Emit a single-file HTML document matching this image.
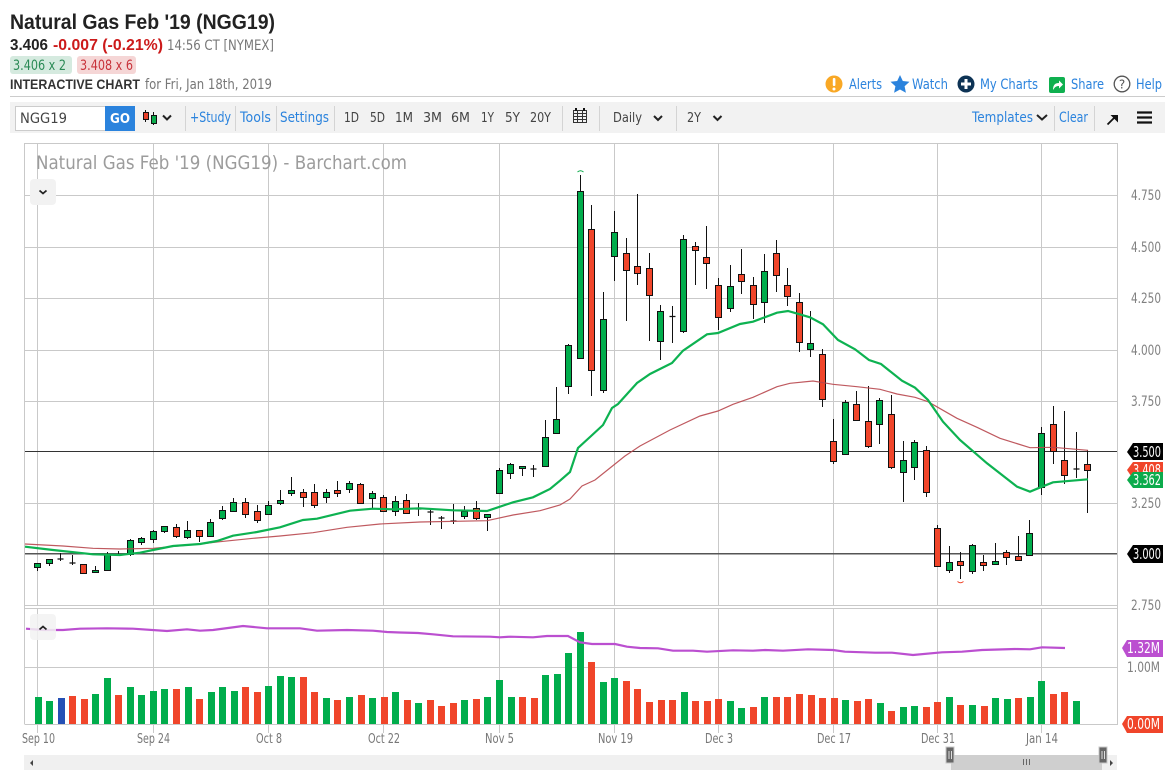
<!DOCTYPE html>
<html lang="en"><head><meta charset="utf-8"><title>Natural Gas Feb '19 (NGG19)</title>
<style>
html,body{margin:0;padding:0;background:#fff;width:1175px;height:773px;overflow:hidden}
svg{display:block}
text{font-family:"DejaVu Sans","Liberation Sans",sans-serif}
.l{fill:#2b83dd;font-size:14px}
.t{fill:#444;font-size:13.5px}
.y{fill:#808080;font-size:14px}
.d{fill:#777;font-size:13px}
.w{fill:#fff;font-size:15px}
</style></head><body>
<svg width="1175" height="773" viewBox="0 0 1175 773" xmlns="http://www.w3.org/2000/svg">
<rect width="1175" height="773" fill="#fff"/>
<!-- header -->
<text x="10" y="29" font-size="21" font-weight="bold" fill="#222" style="font-family:'Liberation Sans',sans-serif" textLength="265" lengthAdjust="spacingAndGlyphs">Natural Gas Feb '19 (NGG19)</text>
<text x="10" y="50" font-size="16" font-weight="bold" fill="#222" style="font-family:'Liberation Sans',sans-serif" textLength="38" lengthAdjust="spacingAndGlyphs">3.406</text>
<text x="53" y="50" font-size="16" font-weight="bold" fill="#cc1a1a" style="font-family:'Liberation Sans',sans-serif" textLength="110" lengthAdjust="spacingAndGlyphs">-0.007 (-0.21%)</text>
<text x="167" y="50" font-size="14" fill="#777" textLength="107" lengthAdjust="spacingAndGlyphs">14:56 CT [NYMEX]</text>
<rect x="10" y="56" width="62" height="18" rx="3" fill="#d5eadf"/>
<text x="13" y="70" font-size="14" fill="#2a8a55" textLength="53" lengthAdjust="spacingAndGlyphs">3.406 x 2</text>
<rect x="77" y="56" width="59" height="18" rx="3" fill="#f5d6d6"/>
<text x="80" y="70" font-size="14" fill="#c8323a" textLength="53" lengthAdjust="spacingAndGlyphs">3.408 x 6</text>
<text x="10" y="89" font-size="14" font-weight="bold" fill="#333" style="font-family:'Liberation Sans',sans-serif" textLength="130" lengthAdjust="spacingAndGlyphs">INTERACTIVE CHART</text>
<text x="145" y="89" font-size="14" fill="#777" textLength="127" lengthAdjust="spacingAndGlyphs">for Fri, Jan 18th, 2019</text>
<!-- top links -->
<circle cx="834" cy="84" r="8.5" fill="#f9a825"/><rect x="832.8" y="78" width="2.6" height="8" rx="1" fill="#fff"/><circle cx="834" cy="89" r="1.5" fill="#fff"/>
<text class="l" x="849" y="89" textLength="33" lengthAdjust="spacingAndGlyphs">Alerts</text>
<path d="M900 75l2.8 6 6.700.8-4.900 4.500 1.300 6.500-5.900-3.300-5.900 3.300 1.300-6.500-4.900-4.500 6.700-.8z" fill="#2b83dd"/>
<text class="l" x="912" y="89" textLength="36" lengthAdjust="spacingAndGlyphs">Watch</text>
<circle cx="966" cy="84" r="8.5" fill="#0d3355"/><path d="M966 79v10M961 84h10" stroke="#fff" stroke-width="3"/>
<text class="l" x="980" y="89" textLength="58" lengthAdjust="spacingAndGlyphs">My Charts</text>
<rect x="1049" y="77" width="16" height="16" rx="2" fill="#0fb04f"/><path d="M1053 90c0-5 2-7 6-7v-2.500l4 4-4 4v-2.500c-3 0-4 1-6 4z" fill="#fff"/>
<text class="l" x="1071" y="89" textLength="33" lengthAdjust="spacingAndGlyphs">Share</text>
<circle cx="1122" cy="84" r="7.800" fill="none" stroke="#555" stroke-width="1.300"/><text x="1122" y="88.500" font-size="12" fill="#555" text-anchor="middle">?</text>
<text class="l" x="1136" y="89" textLength="26" lengthAdjust="spacingAndGlyphs">Help</text>
<rect x="10" y="96" width="1155" height="1" fill="#ccc"/>
<!-- toolbar -->
<rect x="10" y="102" width="1155" height="31" fill="#f2f2f2"/>
<rect x="15.500" y="106.500" width="90" height="24" fill="#fff" stroke="#ccc"/>
<text x="20" y="123" font-size="14.500" fill="#444" textLength="47" lengthAdjust="spacingAndGlyphs">NGG19</text>
<rect x="105" y="106" width="30" height="25" fill="#2b83dd"/>
<text x="110" y="123" font-size="13.500" font-weight="bold" fill="#fff" textLength="20" lengthAdjust="spacingAndGlyphs">GO</text>
<path d="M145.500 110v12M153.500 112v13" stroke="#111"/><rect x="143.500" y="112.500" width="5" height="7" fill="#e8402a" stroke="#111"/><rect x="151.500" y="115.500" width="5" height="8" fill="#0cab4c" stroke="#111"/>
<path d="M163 115.500l4 4 4-4M654 116l4 4 4-4M713.500 116l4 4 4-4M1037 115l5 4.500 5-4.500" fill="none" stroke="#222" stroke-width="2"/>
<path d="M185.500 106v25M235.500 106v25M276.500 106v25M334.500 106v25M562.500 106v25M599.500 106v25M676.500 106v25M1054.500 106v25M1094.500 106v25" stroke="#d4d4d4"/>
<text class="l" x="190" y="122" textLength="41" lengthAdjust="spacingAndGlyphs">+Study</text>
<text class="l" x="240" y="122" textLength="31" lengthAdjust="spacingAndGlyphs">Tools</text>
<text class="l" x="280" y="122" textLength="49" lengthAdjust="spacingAndGlyphs">Settings</text>
<text class="t" x="344" y="122" textLength="15" lengthAdjust="spacingAndGlyphs">1D</text>
<text class="t" x="370" y="122" textLength="15" lengthAdjust="spacingAndGlyphs">5D</text>
<text class="t" x="395" y="122" textLength="18" lengthAdjust="spacingAndGlyphs">1M</text>
<text class="t" x="423" y="122" textLength="19" lengthAdjust="spacingAndGlyphs">3M</text>
<text class="t" x="451" y="122" textLength="19" lengthAdjust="spacingAndGlyphs">6M</text>
<text class="t" x="481" y="122" textLength="13" lengthAdjust="spacingAndGlyphs">1Y</text>
<text class="t" x="505" y="122" textLength="15" lengthAdjust="spacingAndGlyphs">5Y</text>
<text class="t" x="530" y="122" textLength="21" lengthAdjust="spacingAndGlyphs">20Y</text>
<g fill="none" stroke="#333"><rect x="573.500" y="110.500" width="13" height="12"/><path d="M573.500 113.500h13M573.500 116.500h13M573.500 119.500h13M577.500 110v13M582.500 110v13"/></g><path d="M576 108v3M584 108v3" stroke="#111" stroke-width="2"/>
<text class="t" x="613" y="122" textLength="29" lengthAdjust="spacingAndGlyphs">Daily</text>
<text class="t" x="687" y="122" textLength="14" lengthAdjust="spacingAndGlyphs">2Y</text>
<text class="l" x="972" y="122" textLength="61" lengthAdjust="spacingAndGlyphs">Templates</text>
<text class="l" x="1059" y="122" textLength="29" lengthAdjust="spacingAndGlyphs">Clear</text>
<path d="M1107.500 124.500l8-8" stroke="#111" stroke-width="1.800"/><path d="M1110.500 115h7.500v7.500z" fill="#111"/>
<path d="M1137 112.500h15M1137 117.500h15M1137 122.500h15" stroke="#111" stroke-width="2.200"/>
<!-- chart frame and grid -->
<g stroke="#c9c9c9" fill="none">
<path d="M24.500 724V143.500H1117.500V724.500H24.500"/>
<path d="M25 195.500H1117M25 247.500H1117M25 298.500H1117M25 350.500H1117M25 401.500H1117M25 503.500H1117M25 605.500H1117M25 608.500H1117M25 667.500H1117"/>
<path d="M37.500 143V605M153.500 143V605M268.500 143V605M383.500 143V605M499.500 143V605M614.500 143V605M718.500 143V605M833.500 143V605M937.500 143V605M1041.500 143V605"/>
<path d="M37.500 609V733M153.500 609V733M268.500 609V733M383.500 609V733M499.500 609V733M614.500 609V733M718.500 609V733M833.500 609V733M937.500 609V733M1041.500 609V733"/>
</g>
<text x="36" y="169" font-size="19" fill="#9c9c9c" textLength="371" lengthAdjust="spacingAndGlyphs">Natural Gas Feb '19 (NGG19) - Barchart.com</text>
<rect x="30" y="179" width="26" height="26" rx="4" fill="#f2f2f2"/>
<path d="M39.500 190.500l3.500 3 3.500-3" fill="none" stroke="#222" stroke-width="1.800"/>
<!-- horizontal levels -->
<path d="M25 451.500H1117" stroke="#333" stroke-width="1"/>
<path d="M25 553.700H1117" stroke="#555" stroke-width="1.500"/>
<!-- wicks -->
<path stroke="#111" stroke-width="1" fill="none" d="M37.500 563V571M49.500 559V566M60.500 553V561M72.500 555V565M95.500 566V573M107.500 552V571M118.500 551V556M130.500 539V556M141.500 537V545M153.500 530V543M164.500 526V533M176.500 524V538M187.500 521V539M199.500 530V542M210.500 519V537M222.500 506V520M233.500 498V512M245.500 498V518M257.500 505V523M268.500 501V515M280.500 490V505M291.500 477V496M303.500 489V507M314.500 484V508M326.500 489V503M337.500 481V497M349.500 481V493M360.500 483V504M372.500 491V508M383.500 495V512M395.500 496V516M406.500 494V514M418.500 503V516M430.500 509V525M441.500 516V529M453.500 504V524M464.500 506V519M476.500 501V520M487.500 514V531M499.500 468V494M510.500 463V479M522.500 466V476M533.500 465V477M545.500 420V467M556.500 387V434M568.500 344V394M580.500 175V358M591.500 205V396M603.500 292V393M614.500 211V281M626.500 238V321M637.500 194V285M649.500 253V341M660.500 305V360M672.500 306V343M683.500 235V333M695.500 242V285M706.500 226V289M718.500 278V330M730.500 265V312M741.500 249V294M753.500 277V319M764.500 254V323M776.500 240V292M787.500 268V306M799.500 293V352M810.500 311V357M822.500 349V407M833.500 419V464M845.500 400V455M856.500 391V421M868.500 386V448M879.500 398V444M891.500 395V469M903.500 441V502M914.500 440V480M926.500 446V497M937.500 525V567M949.500 546V573M960.500 552V579M972.500 544V574M983.500 555V571M995.500 543V565M1006.500 550V565M1018.500 536V561M1029.500 520V556M1041.500 427V495M1053.500 406V464M1064.500 411V484M1076.500 432V478M1087.500 450V513"/>
<path stroke="#111" stroke-width="1.300" fill="none" d="M57.500 559h6M69.500 563h6M115.500 555h6M415.500 509h6M427.500 512h6M438.500 518h6M450.500 521h6M530.500 469h6M669.500 316.500h6M1073.500 469h6"/>
<!-- green bodies -->
<g fill="#00ad4c" stroke="#111">
<path d="M34.500 563.500h6v4h-6zM46.500 559.500h6v4h-6zM92.500 570.500h6v2h-6zM104.500 554.500h6v16h-6zM127.500 540.500h6v14h-6zM138.500 538.500h6v4h-6zM150.500 531.500h6v8h-6zM161.500 526.500h6v5h-6zM184.500 530.500h6v7h-6zM207.500 522.500h6v14h-6zM219.500 510.500h6v8h-6zM230.500 502.500h6v9h-6zM265.500 505.500h6v9h-6zM277.500 500.500h6v3h-6zM288.500 490.500h6v3h-6zM323.500 492.500h6v5h-6zM346.500 483.500h6v6h-6zM369.500 493.500h6v5h-6zM392.500 501.500h6v10h-6zM461.500 511.500h6v5h-6zM484.500 514.500h6v3h-6zM496.500 470.500h6v23h-6zM507.500 464.500h6v9h-6zM519.500 466.500h6v2h-6zM542.500 437.500h6v29h-6zM553.500 419.500h6v14h-6zM565.500 345.500h6v41h-6zM577.500 191.500h6v167h-6zM600.500 319.500h6v71h-6zM611.500 232.500h6v24h-6zM657.500 311.500h6v30h-6zM680.500 239.500h6v92h-6zM727.500 286.500h6v22h-6zM761.500 271.500h6v31h-6zM807.500 343.500h6v6h-6zM842.500 402.500h6v52h-6zM876.500 400.500h6v24h-6zM900.500 460.500h6v12h-6zM911.500 442.500h6v25h-6zM946.500 562.500h6v8h-6zM969.500 545.500h6v26h-6zM992.500 561.500h6v3h-6zM1026.500 533.500h6v22h-6zM1038.500 433.500h6v54h-6z"/>
</g>
<!-- red bodies -->
<g fill="#f0452a" stroke="#111">
<path d="M80.500 564.500h6v9h-6zM173.500 527.500h6v9h-6zM196.500 530.500h6v6h-6zM242.500 502.500h6v12h-6zM254.500 511.500h6v9h-6zM300.500 492.500h6v5h-6zM311.500 492.500h6v13h-6zM334.500 490.500h6v3h-6zM357.500 484.500h6v19h-6zM380.500 497.500h6v14h-6zM403.500 500.500h6v13h-6zM473.500 508.500h6v10h-6zM588.500 229.500h6v141h-6zM623.500 253.500h6v17h-6zM634.500 266.500h6v7h-6zM646.500 268.500h6v27h-6zM692.500 246.500h6v4h-6zM703.500 257.500h6v6h-6zM715.500 285.500h6v32h-6zM738.500 274.500h6v7h-6zM750.500 285.500h6v19h-6zM773.500 253.500h6v22h-6zM784.500 285.500h6v11h-6zM796.500 302.500h6v40h-6zM819.500 354.500h6v45h-6zM830.500 441.500h6v20h-6zM853.500 404.500h6v16h-6zM865.500 421.500h6v25h-6zM888.500 414.500h6v53h-6zM923.500 450.500h6v42h-6zM934.500 528.500h6v38h-6zM957.500 561.500h6v4h-6zM980.500 562.500h6v3h-6zM1003.500 552.500h6v5h-6zM1015.500 556.500h6v4h-6zM1050.500 424.500h6v27h-6zM1061.500 460.500h6v15h-6zM1084.500 464.500h6v6h-6z"/>
</g>
<!-- hi/lo markers -->
<path d="M577.500 172q3-2.500 6 0" fill="none" stroke="#0cab4c" stroke-width="1"/>
<path d="M957.500 581.500q3 2.500 6 0" fill="none" stroke="#f0452a" stroke-width="1"/>
<!-- moving averages -->
<polyline fill="none" stroke="#b8474e" stroke-width="1.200" opacity=".9" points="25,544 63,546 93,548.300 120,549 153,548.300 200,544 220,541.700 253,538.300 280,536 313,532.700 347,527.300 380,524 420,522 487,520.700 513,515 540,510.700 560,505 570,499 582,486 595,480 610,468 625,456 640,446 670,430 700,416 718,411 733,404.300 753,397.300 777,386.700 790,383.300 813,381 833,384.300 857,386.700 880,389.300 897,394 915,397.300 928,401.700 957,418.300 977,427.300 1000,438.300 1030,447.700 1053,447.300 1088,450.300"/>
<polyline fill="none" stroke="#0db251" stroke-width="2.200" points="25,546.700 53,550 93,554.300 120,555 140,552.700 153,550 173,546 200,544 217,541 233,535.700 257,532 280,527.300 303,520 317,518.700 350,510.700 373,508.700 393,509.300 420,508.300 453,510.300 487,511 513,502.300 533,497.300 550,489 560,480.700 570,472 578,448 590,437 603,425 612,408 618,404 637,383 650,374 672,363 683,350.700 707,334.300 718,333 740,324 753,321.700 777,312.700 788,311 810,317.300 823,324.300 838,340 855,349.300 869,360 881,364 902,380.700 915,387.700 928,400 943,421.700 960,440 987,463.300 1017,486.700 1030,491.700 1042,486.700 1053,482.300 1088,479.300"/>
<!-- y axis -->
<g class="y"><text class="y" x="1131" y="200" textLength="30" lengthAdjust="spacingAndGlyphs">4.750</text><text class="y" x="1131" y="252" textLength="30" lengthAdjust="spacingAndGlyphs">4.500</text><text class="y" x="1131" y="303" textLength="30" lengthAdjust="spacingAndGlyphs">4.250</text><text class="y" x="1131" y="355" textLength="30" lengthAdjust="spacingAndGlyphs">4.000</text><text class="y" x="1131" y="406" textLength="30" lengthAdjust="spacingAndGlyphs">3.750</text><text class="y" x="1131" y="508" textLength="30" lengthAdjust="spacingAndGlyphs">3.250</text><text class="y" x="1131" y="610" textLength="30" lengthAdjust="spacingAndGlyphs">2.750</text><text class="y" x="1127" y="672" textLength="33" lengthAdjust="spacingAndGlyphs">1.00M</text></g>
<!-- tags -->
<path d="M1127 452l6-9h30v17h-30z" fill="#000"/><text class="w" x="1133" y="457" textLength="28" lengthAdjust="spacingAndGlyphs">3.500</text>
<path d="M1127 470l6-8h30v17h-30z" fill="#f0452a"/><text class="w" x="1133" y="475" textLength="28" lengthAdjust="spacingAndGlyphs">3.408</text>
<path d="M1127 480l6-8h30v16h-30z" fill="#0cab4c"/><text class="w" x="1133" y="485" textLength="28" lengthAdjust="spacingAndGlyphs">3.362</text>
<path d="M1127 554l6-9h30v18h-30z" fill="#000"/><text class="w" x="1133" y="559" textLength="28" lengthAdjust="spacingAndGlyphs">3.000</text>
<path d="M1122 648l5-8h36v17h-36z" fill="#bb4fd0"/><text class="w" x="1127" y="653" textLength="33" lengthAdjust="spacingAndGlyphs">1.32M</text>
<path d="M1122 724l5-8h36v17h-36z" fill="#f0452a"/><text class="w" x="1127" y="729" textLength="33" lengthAdjust="spacingAndGlyphs">0.00M</text>
<!-- volume bars -->
<path fill="#00ad4c" d="M35 697h7v27h-7zM46 701h7v23h-7zM92 694h7v30h-7zM104 678h7v46h-7zM127 687h7v37h-7zM138 695h7v29h-7zM150 691h7v33h-7zM161 689h7v35h-7zM185 687h7v37h-7zM208 692h7v32h-7zM219 687h7v37h-7zM231 691h7v33h-7zM265 686h7v38h-7zM277 676h7v48h-7zM288 677h7v47h-7zM323 698h7v26h-7zM346 697h7v27h-7zM369 698h7v26h-7zM392 692h7v32h-7zM415 703h7v21h-7zM461 700h7v24h-7zM484 697h7v27h-7zM496 680h7v44h-7zM508 697h7v27h-7zM542 675h7v49h-7zM554 674h7v50h-7zM565 653h7v71h-7zM577 632h7v92h-7zM600 682h7v42h-7zM611 678h7v46h-7zM681 692h7v32h-7zM727 701h7v23h-7zM738 708h7v16h-7zM761 697h7v27h-7zM842 700h7v24h-7zM877 703h7v21h-7zM900 707h7v17h-7zM911 706h7v18h-7zM946 697h7v27h-7zM969 705h7v19h-7zM992 698h7v26h-7zM1004 699h7v25h-7zM1027 697h7v27h-7zM1038 681h7v43h-7zM1073 701h7v23h-7z"/>
<path fill="#f0452a" d="M69 696h7v28h-7zM81 699h7v25h-7zM115 695h7v29h-7zM173 689h7v35h-7zM196 699h7v25h-7zM242 687h7v37h-7zM254 692h7v32h-7zM300 677h7v47h-7zM311 692h7v32h-7zM334 700h7v24h-7zM358 695h7v29h-7zM381 697h7v27h-7zM404 700h7v24h-7zM427 700h7v24h-7zM438 706h7v18h-7zM450 703h7v21h-7zM473 699h7v25h-7zM519 697h7v27h-7zM531 698h7v26h-7zM588 662h7v62h-7zM623 681h7v43h-7zM634 689h7v35h-7zM646 702h7v22h-7zM658 700h7v24h-7zM669 700h7v24h-7zM692 701h7v23h-7zM704 701h7v23h-7zM715 699h7v25h-7zM750 707h7v17h-7zM773 697h7v27h-7zM784 697h7v27h-7zM796 694h7v30h-7zM808 695h7v29h-7zM819 698h7v26h-7zM831 698h7v26h-7zM854 701h7v23h-7zM865 699h7v25h-7zM888 711h7v13h-7zM923 707h7v17h-7zM934 702h7v22h-7zM957 705h7v19h-7zM981 706h7v18h-7zM1015 698h7v26h-7zM1050 694h7v30h-7zM1061 692h7v32h-7z"/>
<path fill="#2450b5" d="M58 698h7v26h-7z"/>
<polyline fill="none" stroke="#bb4fd0" stroke-width="2.200" points="26,628.700 43,630 63,630 80,628.700 107,628.300 133,628.700 167,631 187,629.300 200,630.700 213,630 243,626 267,628.300 300,628.300 317,630.700 347,630 373,630.700 387,632 400,632.500 418,633 433,634.300 453,636.300 490,636.700 500,637.300 510,636.700 533,637.300 547,636 568,636 580,642.300 592,644 615,644 627,646.700 640,648 658,648.300 673,650.700 693,650.700 707,651.700 733,650.300 753,650.700 765,650 783,650.700 808,649.300 833,650 845,651.700 875,652.700 892,652.700 913,655 942,652.300 962,651.700 982,650 1015,649 1030,649.300 1042,647.300 1065,648"/>
<rect x="30" y="614" width="26" height="26" rx="4" fill="#f2f2f2" fill-opacity=".85"/>
<path d="M39.500 629.500l3.500-3 3.500 3" fill="none" stroke="#222" stroke-width="1.800"/>
<!-- date labels -->
<text class="d" x="22" y="743" textLength="33" lengthAdjust="spacingAndGlyphs">Sep 10</text>
<text class="d" x="137" y="743" textLength="33" lengthAdjust="spacingAndGlyphs">Sep 24</text>
<text class="d" x="256" y="743" textLength="26" lengthAdjust="spacingAndGlyphs">Oct 8</text>
<text class="d" x="368" y="743" textLength="32" lengthAdjust="spacingAndGlyphs">Oct 22</text>
<text class="d" x="485" y="743" textLength="29" lengthAdjust="spacingAndGlyphs">Nov 5</text>
<text class="d" x="598" y="743" textLength="35" lengthAdjust="spacingAndGlyphs">Nov 19</text>
<text class="d" x="705" y="743" textLength="28" lengthAdjust="spacingAndGlyphs">Dec 3</text>
<text class="d" x="817" y="743" textLength="34" lengthAdjust="spacingAndGlyphs">Dec 17</text>
<text class="d" x="921" y="743" textLength="34" lengthAdjust="spacingAndGlyphs">Dec 31</text>
<text class="d" x="1026" y="743" textLength="32" lengthAdjust="spacingAndGlyphs">Jan 14</text>
<!-- scrollbar -->
<rect x="24" y="755" width="1093" height="15" fill="#f0f0f0"/>
<rect x="951" y="755" width="151" height="15" fill="#cfcfcf"/>
<path d="M1023.500 759v6M1026.500 759v6M1029.500 759v6" stroke="#666"/>
<path d="M33 760v6l-3-3zM1110 760v6l3-3z" fill="#444"/>
<rect x="946" y="747" width="8" height="16" fill="#666" stroke="#c8c8c8"/>
<rect x="1099" y="747" width="8" height="16" fill="#666" stroke="#c8c8c8"/>
<path d="M949 751v8M951.500 751v8M1102 751v8M1104.500 751v8" stroke="#ddd"/>
</svg>
</body></html>
